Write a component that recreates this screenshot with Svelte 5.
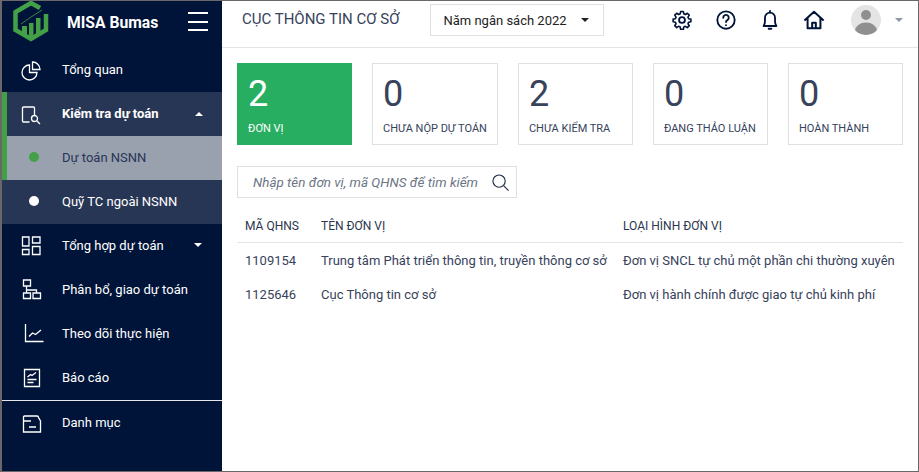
<script>
	const stats = [
		{ value: 2, label: "ĐƠN VỊ", active: true },
		{ value: 0, label: "CHƯA NỘP DỰ TOÁN" },
		{ value: 2, label: "CHƯA KIỂM TRA" },
		{ value: 0, label: "ĐANG THẢO LUẬN" },
		{ value: 0, label: "HOÀN THÀNH" }
	];

	const rows = [
		{ code: "1109154", name: "Trung tâm Phát triển thông tin, truyền thông cơ sở", type: "Đơn vị SNCL tự chủ một phần chi thường xuyên" },
		{ code: "1125646", name: "Cục Thông tin cơ sở", type: "Đơn vị hành chính được giao tự chủ kinh phí" }
	];
</script>

<div class="window">
	<aside class="sidebar">
		<div class="brand">
			<svg class="logo" width="36" height="42" viewBox="13 0 36 42" fill="none">
				<path d="M46 14 V30 L31 39 L15.500 30 V12 L31 3 L40 8" stroke="#43a047" stroke-width="4.500" />
				<path d="M22 26h5v10h-5Z M29 23h4.500v15h-4.500Z M36 18h4.500v16h-4.500Z" fill="#43a047" />
				<path d="M21 24 L31 17 L42 10" stroke="#43a047" stroke-width="0.800" />
			</svg>
			<span class="brand-name">MISA Bumas</span>
			<div class="burger"><i></i><i></i><i></i></div>
		</div>

		<a class="item">
			<svg class="ico" viewBox="0 0 20 20" fill="none"><path d="M7.500 5a7.500 7.500 0 1 0 7.500 7.500H7.500Z M10.500 2a7.500 7.500 0 0 1 7.500 7.500h-7.500Z" /></svg>
			<span>Tổng quan</span>
		</a>

		<a class="item open">
			<svg class="ico" viewBox="0 0 20 20" fill="none"><path d="M7.500 18H1.500a1 1 0 0 1-1-1V4a1 1 0 0 1 1-1h10a1 1 0 0 1 1 1v7 M9.500 14.500a3 3 0 1 0 6 0a3 3 0 1 0-6 0 M14.700 16.800l3.300 3.200" /></svg>
			<span class="bold">Kiểm tra dự toán</span>
			<b class="caret up"></b>
		</a>
		<a class="sub current"><em></em><span>Dự toán NSNN</span></a>
		<a class="sub"><em></em><span>Quỹ TC ngoài NSNN</span></a>

		<a class="item">
			<svg class="ico" viewBox="0 0 20 20" fill="none"><path d="M.5 1h6.500v9H.5Z M10.500 1h7.500v6h-7.500Z M.5 13.500h6.500v5H.5Z M10.500 10.500h7.500v8h-7.500Z" /></svg>
			<span>Tổng hợp dự toán</span>
			<b class="caret"></b>
		</a>
		<a class="item">
			<svg class="ico" viewBox="0 0 20 20" fill="none"><path d="M1.500 0h7v6h-7Z M1.500 13h7v5.500h-7Z M11 13h7.500v5.500h-7.500Z M4.500 6v7 M4.500 10H14.500V13" /></svg>
			<span>Phân bổ, giao dự toán</span>
		</a>
		<a class="item">
			<svg class="ico" viewBox="0 0 20 20" fill="none"><path d="M3.500 0v17.500h18 M7 12.500l3.500-3.500 3 1.500 5.500-4.500" /></svg>
			<span>Theo dõi thực hiện</span>
		</a>
		<a class="item">
			<svg class="ico" viewBox="0 0 20 20" fill="none"><path d="M2.500 1.500h15v17h-15Z M5.500 9l3-2.500 1.500 1 4-3 M5.500 11.500h9 M5.500 14.500h6" /></svg>
			<span>Báo cáo</span>
		</a>
		<div class="divider"></div>
		<a class="item">
			<svg class="ico" viewBox="0 0 20 20" fill="none"><path d="M1.500 19V4a1 1 0 0 1 1-1h12.500a1.500 1.500 0 0 1 1.500 1.500l2 3.500v11Z M1.500 8H9 M7 14h7" /></svg>
			<span>Danh mục</span>
		</a>
	</aside>

	<main class="content">
		<header class="topbar">
			<h1>CỤC THÔNG TIN CƠ SỞ</h1>
			<div class="year"><span>Năm ngân sách 2022</span><b class="caret dark"></b></div>
			<div class="tools">
				<svg width="22" height="22" viewBox="0 0 24 24" fill="none" stroke="#001439" stroke-width="2" stroke-linejoin="round"><path d="M10.300 2.500h3.400l.5 2.800 2 .9 2.400-1.600 2.400 2.400-1.600 2.400.8 2 2.800.5v3.300l-2.800.5-.8 2 1.600 2.400-2.400 2.400-2.400-1.600-2 .8-.5 2.800h-3.400l-.5-2.800-2-.8-2.400 1.600-2.400-2.400 1.600-2.400-.8-2-2.800-.5v-3.300l2.800-.5.8-2-1.600-2.400 2.400-2.400 2.400 1.600 2-.9Z" transform="translate(12 12) scale(.88) translate(-12 -13)" /><circle cx="12" cy="12" r="3.200" /></svg>
				<svg width="22" height="22" viewBox="0 0 24 24" fill="none" stroke="#001439" stroke-width="2" stroke-linecap="round"><circle cx="12" cy="12" r="9.500" /><path d="M9 9.500a3 3 0 1 1 4.500 2.600c-1 .6-1.500 1.200-1.500 2.200" /><path d="M12 17.500v.1" /></svg>
				<svg width="22" height="22" viewBox="0 0 24 24" fill="none" stroke="#001439" stroke-width="2" stroke-linejoin="round"><path d="M5 18.500c1-1.500 1.500-2.500 1.500-4.500V9.500a5.500 5.500 0 0 1 11 0V14c0 2 .5 3 1.500 4.500Z" /><path d="M12 2v1.500 M10.500 21.500h3" stroke-linecap="round" /></svg>
				<svg width="22" height="22" viewBox="0 0 24 24" fill="none" stroke="#001439" stroke-width="2.200" stroke-linejoin="round"><path d="M1.500 12.500 12 3l10.500 9.500 M5 10v11h14V10 M10 21v-6h4v6" /></svg>
			</div>
			<div class="user">
				<svg class="avatar" width="30" height="30" viewBox="0 0 30 30"><defs><clipPath id="av"><circle cx="15" cy="15" r="15" /></clipPath></defs><circle cx="15" cy="15" r="15" fill="#e4e4e4" /><g clip-path="url(#av)" fill="#8f8f8f"><circle cx="15" cy="10" r="5" /><ellipse cx="15" cy="26" rx="11" ry="8.500" /></g></svg>
				<b class="caret grey"></b>
			</div>
		</header>

		<section class="stats">
			{#each stats as s}
				<div class={"stat" + (s.active ? " active" : "")}>
					<div class="num">{s.value}</div>
					<div class="lbl">{s.label}</div>
				</div>
			{/each}
		</section>

		<div class="search">
			<span>Nhập tên đơn vị, mã QHNS để tìm kiếm</span>
			<svg width="17" height="17" viewBox="0 0 18 18" fill="none" stroke="#1d2b45" stroke-width="1.200"><circle cx="7.500" cy="7.500" r="6.500" /><path d="M12.300 12.300l5.200 5.200" /></svg>
		</div>

		<table>
			<thead>
				<tr><th class="c1">MÃ QHNS</th><th class="c2">TÊN ĐƠN VỊ</th><th>LOẠI HÌNH ĐƠN VỊ</th></tr>
			</thead>
			<tbody>
				{#each rows as r}
					<tr><td>{r.code}</td><td>{r.name}</td><td>{r.type}</td></tr>
				{/each}
			</tbody>
		</table>
	</main>
</div>

<style>
	:global(body) {
		margin: 0;
		background: #fff;
		font-family: Roboto, "Noto Sans", sans-serif;
	}

	.window {
		display: flex;
		box-sizing: border-box;
		width: 919px;
		height: 472px;
		overflow: hidden;
		border-top: 1px solid #6b6668;
		border-left: 2px solid #6b6668;
		border-right: 1px solid #6b6668;
		border-bottom: 1px solid #6b6668;
	}

	.sidebar {
		flex: 0 0 220px;
		background: #001439;
		color: #fff;
		font-size: 13px;
	}

	.brand {
		display: flex;
		align-items: center;
		height: 47px;
	}

	.logo {
		flex: none;
		margin: 0 0 7px 11px;
	}

	.brand-name {
		margin-left: 18px;
		margin-bottom: 5px;
		font-size: 15.700px;
		font-weight: 700;
	}

	.burger {
		display: flex;
		flex-direction: column;
		gap: 6.500px;
		margin-left: auto;
		margin-right: 14px;
		margin-bottom: 6px;
	}

	.burger i {
		display: block;
		width: 20px;
		height: 2px;
		background: #fff;
	}

	.item, .sub {
		display: flex;
		align-items: center;
		height: 44px;
	}

	.item span, .sub span {
		margin-bottom: 2px;
	}

	.ico {
		flex: none;
		width: 20px;
		height: 20px;
		margin-left: 20px;
		margin-right: 20px;
		overflow: visible;
		stroke: #fff;
		stroke-width: 1.300;
	}

	.bold {
		font-weight: 700;
	}

	.open {
		background: #283655;
		border-left: 5px solid #43a047;
	}

	.open .ico {
		margin-left: 15px;
	}

	.sub {
		background: #283655;
	}

	.sub em {
		flex: none;
		width: 10px;
		height: 10px;
		margin-left: 27px;
		margin-right: 23px;
		margin-bottom: 2px;
		border-radius: 50%;
		background: #fff;
	}

	.sub.current {
		background: #99a1af;
		color: #283655;
		border-left: 5px solid #43a047;
	}

	.sub.current em {
		margin-left: 22px;
		background: #43a047;
	}

	.caret {
		width: 0;
		height: 0;
		border-left: 4px solid transparent;
		border-right: 4px solid transparent;
		border-top: 4px solid #fff;
	}

	.caret.up {
		border-top: 0;
		border-bottom: 4px solid #fff;
		margin-left: 36px;
	}

	.item > .caret:not(.up) {
		margin-left: 30px;
		margin-bottom: 2px;
	}

	.divider {
		height: 1px;
		background: #e6e6e6;
	}

	.content {
		flex: 1;
		min-width: 0;
		color: #37425b;
	}

	.topbar {
		display: flex;
		align-items: center;
		box-sizing: border-box;
		height: 47px;
		padding-bottom: 8px;
		border-bottom: 1px solid #e4e4e4;
	}

	h1 {
		margin: 0 0 2px 20px;
		font-size: 15px;
		font-weight: 400;
		color: #37425b;
	}

	.year {
		display: flex;
		align-items: center;
		box-sizing: border-box;
		width: 174px;
		height: 32px;
		margin-left: 31px;
		padding-left: 12px;
		border: 1px solid #e0e0e0;
		font-size: 13px;
		color: #222;
	}

	.caret.dark {
		border-top-color: #222;
		margin-left: 14px;
	}

	.tools {
		display: flex;
		gap: 22px;
		margin-left: 67px;
	}

	.user {
		display: flex;
		align-items: center;
		margin-left: 26px;
	}

	.caret.grey {
		border-top-color: #8f96a3;
		margin-left: 14px;
	}

	.stats {
		display: flex;
		gap: 20px;
		padding: 15px 0 0 15px;
	}

	.stat {
		box-sizing: border-box;
		min-width: 115px;
		height: 82px;
		padding: 10px 10px 0;
		border: 1px solid #e0e0e0;
		color: #37425b;
	}

	.stat.active {
		background: #27ae60;
		border-color: #27ae60;
		color: #fff;
	}

	.num {
		font-size: 36px;
		line-height: 40px;
	}

	.lbl {
		margin-top: 8px;
		font-size: 11px;
		line-height: 14px;
		white-space: nowrap;
	}

	.search {
		display: flex;
		align-items: center;
		justify-content: space-between;
		box-sizing: border-box;
		width: 280px;
		height: 32px;
		margin: 21px 0 0 15px;
		padding: 0 7px 0 15px;
		border: 1px solid #e0e0e0;
		font-size: 13.400px;
		font-style: italic;
		color: #6d7585;
	}

	table {
		width: 666px;
		margin: 12px 0 0 15px;
		border-collapse: collapse;
		font-size: 13px;
		color: #37425b;
	}

	th {
		height: 32px;
		padding: 0 0 0 8px;
		font-size: 12px;
		font-weight: 400;
		text-align: left;
		color: #2b3650;
		border-bottom: 1px solid #e4e4e4;
	}

	.c1 { width: 68px; }
	.c2 { width: 294px; }

	td {
		height: 34px;
		padding: 0 0 0 8px;
		white-space: nowrap;
	}
</style>
